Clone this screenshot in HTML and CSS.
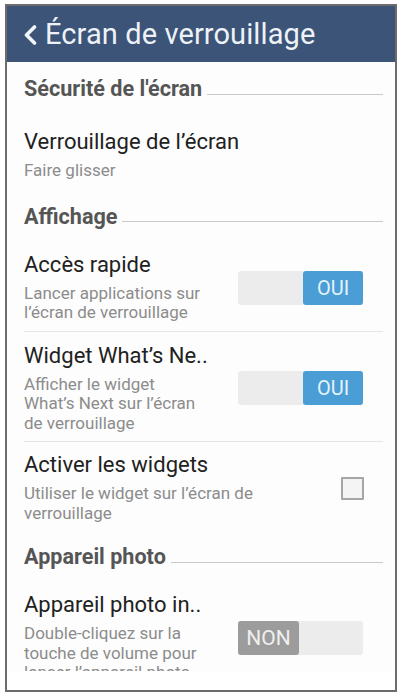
FILE: index.html
```html
<!DOCTYPE html>
<html lang="fr">
<head>
<meta charset="utf-8">
<title>Écran de verrouillage</title>
<link rel="stylesheet" href="styles.css">
</head>
<body>
<div class="phone">
  <header class="appbar">
    <svg class="back" width="14" height="20" viewBox="0 0 14 20"><path d="M11.5 2 L3.5 10 L11.5 18" fill="none" stroke="#f2f5f9" stroke-width="3.6" stroke-linecap="round" stroke-linejoin="round"/></svg>
    <h1 class="title">Écran de verrouillage</h1>
  </header>
  <div class="list">
    <div class="section section-first"><span class="section-label">Sécurité de l'écran</span><span class="section-line"></span></div>

    <div class="item item-first">
      <div class="text">
        <div class="item-title">Verrouillage de l’écran</div>
        <div class="item-sub">Faire glisser</div>
      </div>
    </div>

    <div class="section"><span class="section-label">Affichage</span><span class="section-line"></span></div>

    <div class="item">
      <div class="text">
        <div class="item-title">Accès rapide</div>
        <div class="item-sub">Lancer applications sur<br>l’écran de verrouillage</div>
      </div>
      <div class="toggle on"><span class="knob">OUI</span></div>
    </div>

    <div class="item item-divided">
      <div class="text">
        <div class="item-title">Widget What’s Ne..</div>
        <div class="item-sub">Afficher le widget<br>What’s Next sur l’écran<br>de verrouillage</div>
      </div>
      <div class="toggle on"><span class="knob">OUI</span></div>
    </div>

    <div class="item item-divided item-last">
      <div class="text">
        <div class="item-title">Activer les widgets</div>
        <div class="item-sub">Utiliser le widget sur l’écran de<br>verrouillage</div>
      </div>
      <div class="checkbox"></div>
    </div>

    <div class="section section-tight"><span class="section-label">Appareil photo</span><span class="section-line"></span></div>

    <div class="item">
      <div class="text">
        <div class="item-title">Appareil photo in..</div>
        <div class="item-sub">Double-cliquez sur la<br>touche de volume pour<br>lancer l’appareil photo</div>
      </div>
      <div class="toggle off"><span class="knob">NON</span></div>
    </div>
  </div>
  <div class="bottom-space"></div>
</div>
</body>
</html>
```

FILE: styles.css
```css
html, body {
  margin: 0;
  background: #ffffff;
}
body {
  padding: 4px 0 0 5px;
  font-family: Roboto, "Noto Sans", "Liberation Sans", sans-serif;
}
.phone {
  width: 392px;
  height: 688px;
  box-sizing: border-box;
  border: 2px solid #6c6c6c;
  display: flex;
  flex-direction: column;
  background: #fdfdfd;
}
.appbar {
  height: 56px;
  flex: none;
  background: #3b5478;
  display: flex;
  align-items: center;
  padding-left: 16px;
  gap: 8px;
}
.back {
  display: block;
  margin-top: 1px;
}
.title {
  margin: 0;
  font-weight: 400;
  font-size: 29px;
  color: #eef2f7;
  letter-spacing: 0.1px;
}
.list {
  height: 609px;
  flex: none;
  overflow: hidden;
  padding: 0 12px 0 17px;
}
.bottom-space {
  flex: 1;
  background: #ffffff;
}
.section {
  display: flex;
  align-items: center;
  gap: 5px;
  padding: 17px 0 13px;
}
.section-first {
  padding-top: 16px;
}
.section-tight {
  padding-top: 16px;
}
.section-label {
  font-weight: 700;
  font-size: 21.6px;
  line-height: 22px;
  color: #555555;
  white-space: nowrap;
}
.section-line {
  flex: 1;
  height: 1px;
  background: #c9c9c9;
  margin-top: 10px;
}
.item {
  display: flex;
  align-items: center;
  padding: 12px 0 8px;
}
.item-first {
  padding-top: 17px;
}
.item-last {
  padding-top: 11px;
  padding-bottom: 7px;
}
.item-divided {
  border-top: 1px solid #e6e6e6;
}
.text {
  flex: 1;
  white-space: nowrap;
}
.item-title {
  font-size: 22px;
  line-height: 24px;
  color: #212121;
  margin-bottom: 7px;
}
.item-sub {
  font-size: 17px;
  line-height: 19.5px;
  color: #8c8c8c;
}
.toggle {
  width: 125px;
  height: 34px;
  flex: none;
  margin-right: 20px;
  background: #ececec;
  border-radius: 3px;
  display: flex;
}
.toggle.on {
  justify-content: flex-end;
}
.knob {
  width: 60px;
  height: 34px;
  border-radius: 3px;
  display: flex;
  align-items: center;
  justify-content: center;
  font-size: 20px;
}
.toggle.on .knob {
  background: #4a9ed5;
  color: #e3f3fb;
}
.toggle.off .knob {
  width: 61px;
  background: #9c9c9c;
  color: #efefef;
  font-size: 21px;
}
.checkbox {
  width: 19px;
  height: 19px;
  flex: none;
  margin-right: 19px;
  border: 2px solid #a6a6a6;
  background: #f4f4f4;
  border-radius: 1px;
}
```
